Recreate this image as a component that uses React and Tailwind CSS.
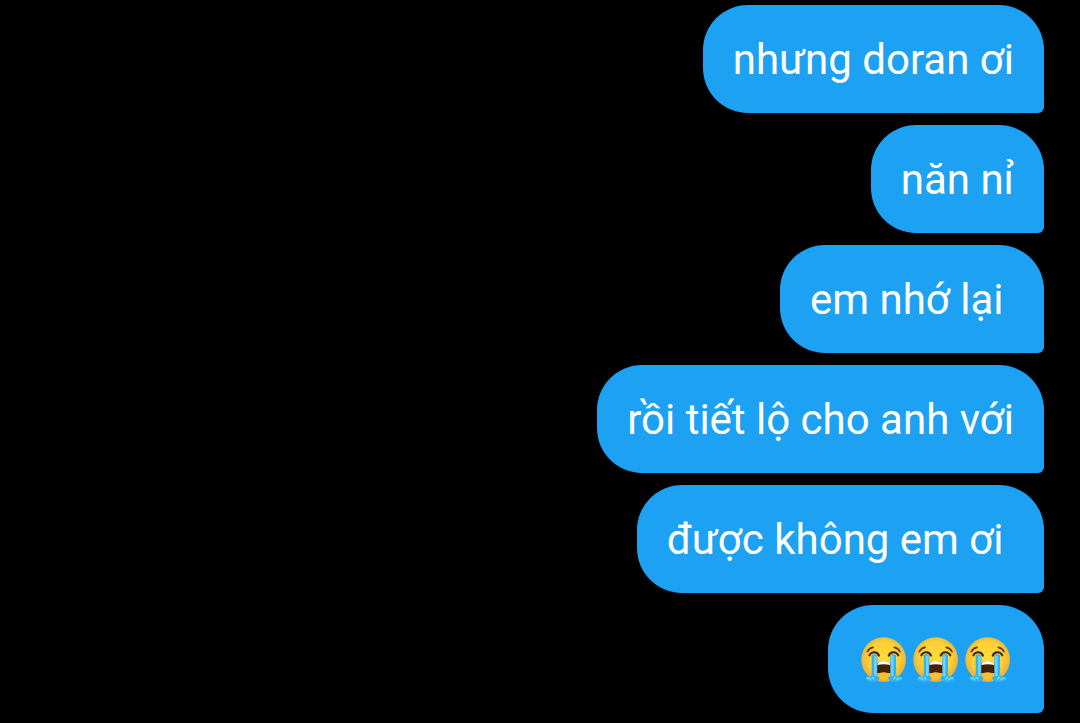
const messages = [
  { id: 1, text: "nhưng doran ơi" },
  { id: 2, text: "năn nỉ" },
  { id: 3, text: "em nhớ lại " },
  { id: 4, text: "rồi tiết lộ cho anh với" },
  { id: 5, text: "được không em ơi " },
  { id: 6, crying: 3 },
];

function CryingFace() {
  return (
    <svg viewBox="6 12 156 156" className="h-[52px] w-[52px]" role="img" aria-label="loudly crying face">
      <defs>
        <radialGradient id="face" cx="0.5" cy="0.45" r="0.55">
          <stop offset="0" stopColor="#fddc3c" />
          <stop offset="0.65" stopColor="#fbcf36" />
          <stop offset="1" stopColor="#e9ab3a" />
        </radialGradient>
      </defs>
      <circle cx="83" cy="89" r="67" fill="url(#face)" />

      {/* brows */}
      <path d="M34 65 Q40 54 51 52" fill="none" stroke="#5d3c12" strokeWidth="5" strokeLinecap="round" />
      <path d="M132 65 Q126 54 115 52" fill="none" stroke="#5d3c12" strokeWidth="5" strokeLinecap="round" />

      {/* mouth */}
      <path d="M63 130 V106 Q64 93 83 93 Q103 93 104 106 V130 Q83 126 63 130 Z" fill="#42200b" />
      <path d="M64 105 Q65 93 83 93 Q102 93 103 105 Q83 101 64 105 Z" fill="#fff" />
      <path d="M65 131 Q83 122 102 131 Q96 149 83 149 Q71 149 65 131 Z" fill="#fbc02d" />

      {/* tears */}
      <path
        d="M47 75 Q55 70 64 75 V136 Q72 143 69 150 Q64 157 53 155 Q45 159 39 153 Q28 153 28 146 Q29 139 39 140 Q46 140 47 132 Z"
        fill="#33b4ee"
      />
      <path
        d="M120 75 Q112 70 103 75 V136 Q95 143 98 150 Q103 157 114 155 Q122 159 128 153 Q139 153 139 146 Q138 139 128 140 Q121 140 120 132 Z"
        fill="#33b4ee"
      />
      <path d="M58 77 V138 M109 77 V138" fill="none" stroke="#6fd8f8" strokeWidth="7" />
      <path
        d="M32 145 Q40 142 44 149 M48 141 L54 147 M135 145 Q127 142 123 149 M119 141 L113 147"
        fill="none"
        stroke="#7adff9"
        strokeWidth="4"
        strokeLinecap="round"
      />

      {/* eyes */}
      <path d="M40 76 Q45 67 55 67 Q65 67 69 77" fill="none" stroke="#42200b" strokeWidth="6" strokeLinecap="round" />
      <path d="M98 77 Q102 67 112 67 Q122 67 127 76" fill="none" stroke="#42200b" strokeWidth="6" strokeLinecap="round" />
    </svg>
  );
}

function Bubble({ message }) {
  return (
    <li className="flex min-h-[108px] items-center rounded-[45px] rounded-br-[6px] bg-[#1da1f2] px-[30px] pt-0.5 text-[42px] leading-[52px] whitespace-pre-wrap text-white">
      {message.text}
      {message.crying && Array.from({ length: message.crying }, (_, i) => <CryingFace key={i} />)}
    </li>
  );
}

export default function App() {
  return (
    <main className="min-h-screen bg-black pt-[5px] pr-9 pb-[10px] pl-9 font-['Roboto','Noto_Sans',sans-serif]">
      <ul className="flex flex-col items-end gap-3">
        {messages.map((message) => (
          <Bubble key={message.id} message={message} />
        ))}
      </ul>
    </main>
  );
}
